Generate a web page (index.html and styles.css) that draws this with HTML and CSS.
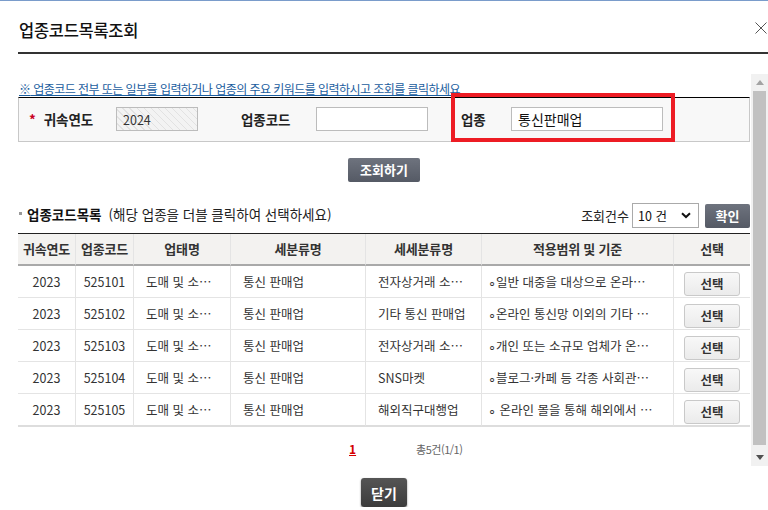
FILE: index.html
```html
<!DOCTYPE html>
<html lang="ko">
<head>
    <meta charset="UTF-8">
    <meta name="viewport" content="width=device-width, initial-scale=1.0">
    <title>업종코드목록조회</title>
    <link rel="stylesheet" href="styles.css">
</head>
<body>
    <div class="pop-head">
        <h1 class="pop-title">업종코드목록조회</h1>
        <svg class="pop-close" width="12" height="12" viewBox="0 0 12 12">
            <path d="M0.5 0.5 L11.5 11.5 M11.5 0.5 L0.5 11.5" stroke="#555" stroke-width="1" fill="none"/>
        </svg>
    </div>

    <div class="frame">
        <div class="frame-body">
            <p class="notice"><span class="notice-mark">※</span> 업종코드 전부 또는 일부를 입력하거나 업종의 주요 키워드를 입력하시고 조회를 클릭하세요</p>

            <div class="search-box">
                <label class="search-label req"><span class="star">*</span>귀속연도</label>
                <div><input type="text" class="inp inp-year" value="2024" readonly></div>
                <label class="search-label">업종코드</label>
                <div><input type="text" class="inp inp-code"></div>
                <label class="search-label">업종</label>
                <div><input type="text" class="inp inp-name" value="통신판매업"></div>
                <div class="mark-box"></div>
            </div>

            <div class="btn-row">
                <button class="btn-dark btn-search">조회하기</button>
            </div>

            <div class="list-head">
                <span class="bullet"></span>
                <strong class="list-title">업종코드목록</strong>
                <span class="list-desc">(해당 업종을 더블 클릭하여 선택하세요)</span>
                <div class="list-tools">
                    <span>조회건수</span>
                    <div class="select">
                        <span>10 건</span>
                        <svg width="10" height="7" viewBox="0 0 10 7"><path d="M1 1.2 L5 5 L9 1.2" stroke="#111" stroke-width="2" fill="none"/></svg>
                    </div>
                    <button class="btn-dark btn-ok">확인</button>
                </div>
            </div>

            <table class="list">
                <colgroup>
                    <col style="width:57px"><col style="width:58px"><col style="width:97px"><col style="width:135px">
                    <col style="width:116px"><col style="width:192px"><col style="width:77px">
                </colgroup>
                <thead>
                    <tr>
                        <th>귀속연도</th><th>업종코드</th><th>업태명</th><th>세분류명</th><th>세세분류명</th><th>적용범위 및 기준</th><th>선택</th>
                    </tr>
                </thead>
                <tbody>
                    <tr>
                        <td class="c">2023</td><td class="c">525101</td><td>도매 및 소…</td><td>통신 판매업</td>
                        <td>전자상거래 소…</td><td class="scope">∘일반 대중을 대상으로 온라…</td>
                        <td class="c"><button class="btn-sel">선택</button></td>
                    </tr>
                    <tr>
                        <td class="c">2023</td><td class="c">525102</td><td>도매 및 소…</td><td>통신 판매업</td>
                        <td>기타 통신 판매업</td><td class="scope">∘온라인 통신망 이외의 기타 …</td>
                        <td class="c"><button class="btn-sel">선택</button></td>
                    </tr>
                    <tr>
                        <td class="c">2023</td><td class="c">525103</td><td>도매 및 소…</td><td>통신 판매업</td>
                        <td>전자상거래 소…</td><td class="scope">∘개인 또는 소규모 업체가 온…</td>
                        <td class="c"><button class="btn-sel">선택</button></td>
                    </tr>
                    <tr>
                        <td class="c">2023</td><td class="c">525104</td><td>도매 및 소…</td><td>통신 판매업</td>
                        <td>SNS마켓</td><td class="scope">∘블로그·카페 등 각종 사회관…</td>
                        <td class="c"><button class="btn-sel">선택</button></td>
                    </tr>
                    <tr>
                        <td class="c">2023</td><td class="c">525105</td><td>도매 및 소…</td><td>통신 판매업</td>
                        <td>해외직구대행업</td><td class="scope">∘ 온라인 몰을 통해 해외에서 …</td>
                        <td class="c"><button class="btn-sel">선택</button></td>
                    </tr>
                </tbody>
            </table>

            <div class="paging">
                <a class="page-on">1</a>
                <span class="page-total">총5건(1/1)</span>
            </div>
        </div>

        <div class="scrollbar">
            <div class="sb-btn"><svg width="8" height="5" viewBox="0 0 8 5"><path d="M0 5 L4 0 L8 5 Z" fill="#a3a3a3"/></svg></div>
            <div class="sb-thumb"></div>
            <div class="sb-btn"><svg width="8" height="5" viewBox="0 0 8 5"><path d="M0 0 L8 0 L4 5 Z" fill="#505050"/></svg></div>
        </div>
    </div>

    <div class="foot">
        <button class="btn-close">닫기</button>
    </div>
</body>
</html>
```

FILE: styles.css
```css
* {
    box-sizing: border-box;
}
body {
    margin: 0;
    font-family: "Noto Sans CJK KR", "Noto Sans", sans-serif;
    font-size: 12px;
    color: #333;
    background: #fff;
    border-top: 1px solid #7a9ccb;
}
button {
    font-family: inherit;
    cursor: pointer;
}
.pop-head {
    display: flex;
    align-items: flex-start;
    height: 53px;
    margin-left: 18px;
    padding-top: 18px;
    border-bottom: 2px solid #333;
}
.pop-title {
    margin: 0 0 0 1px;
    font-size: 16.5px;
    font-weight: 500;
    line-height: 22px;
    color: #111;
    letter-spacing: -0.3px;
}
.pop-close {
    margin: 3px 1px 0 auto;
}
.frame {
    display: flex;
    height: 392px;
    margin-top: 20px;
}
.frame-body {
    flex: 1;
    min-width: 0;
    padding: 0 1px 0 18px;
    overflow: hidden;
}
.notice {
    margin: 0;
    padding: 7px 0 0 1px;
    line-height: 16px;
    color: #1a5d9e;
    text-decoration: underline;
    letter-spacing: -0.55px;
}
.notice-mark {
    font-weight: bold;
}
.search-box {
    position: relative;
    display: grid;
    grid-template-columns: 97px 125px 75px 145px 50px 152px;
    align-items: center;
    padding: 9px 0 10px;
    background: #f8f8f8;
    border: 1px solid #c8c8c8;
    border-top-color: #000;
}
.search-label {
    font-size: 13.5px;
    font-weight: bold;
    color: #222;
    letter-spacing: -0.1px;
    line-height: 24px;
}
.req {
    padding-left: 10px;
}
.star {
    color: #c8001e;
    margin-right: 8px;
}
.inp {
    display: block;
    height: 24px;
    padding: 0 6px;
    border: 1px solid #bcbcbc;
    background: #fff;
    font-family: inherit;
    font-size: 13px;
    color: #111;
    outline: none;
}
.inp-year {
    width: 82px;
    color: #333;
    font-size: 12.5px;
    background: repeating-linear-gradient(45deg, #f3f3f3 0, #f3f3f3 4px, #e2e2e2 4px, #e2e2e2 5px);
}
.inp-code {
    width: 112px;
}
.inp-name {
    width: 152px;
    font-size: 14px;
}
.mark-box {
    position: absolute;
    left: 432px;
    top: -5px;
    width: 224px;
    height: 49px;
    border: 4px solid #ed1c24;
}
.btn-row {
    margin-top: 16px;
    text-align: center;
}
.btn-dark {
    height: 24px;
    padding: 0 10px;
    border: none;
    border-radius: 2px;
    background: linear-gradient(#6e737e, #555a65);
    color: #fff;
    font-size: 13px;
    font-weight: bold;
    line-height: 24px;
}
.btn-search {
    width: 72px;
}
.list-head {
    display: flex;
    align-items: center;
    height: 25px;
    margin-top: 21px;
}
.bullet {
    width: 3px;
    height: 3px;
    margin: 0 5px 4px 1px;
    background: #999;
}
.list-title {
    font-size: 13.5px;
    color: #111;
    margin-bottom: 4px;
}
.list-desc {
    margin: 0 0 4px 7px;
    font-size: 13.5px;
    color: #222;
}
.list-tools {
    display: flex;
    align-items: center;
    margin-left: auto;
    color: #222;
    font-size: 13px;
}
.select {
    display: flex;
    align-items: center;
    justify-content: space-between;
    width: 67px;
    height: 25px;
    margin-left: 3px;
    padding: 0 7px 0 5px;
    border: 1px solid #aaa;
    background: #fff;
    color: #111;
    font-size: 12.5px;
}
.btn-ok {
    width: 45px;
    margin-left: 6px;
    padding: 0;
}
.list {
    width: 100%;
    margin-top: 5px;
    border-top: 1px solid #222;
    border-spacing: 0;
    table-layout: fixed;
}
.list th {
    height: 32px;
    padding: 0;
    line-height: 30px;
    background: #f3f2f0;
    border-bottom: 2px solid #a9a9a9;
    border-left: 1px solid #e4e4e4;
    font-size: 13px;
    color: #333;
    letter-spacing: -0.2px;
    white-space: nowrap;
}
.list td {
    height: 32px;
    padding: 0 0 0 12px;
    line-height: 31px;
    border-bottom: 1px solid #e4e4e4;
    border-left: 1px solid #e4e4e4;
    white-space: nowrap;
    overflow: hidden;
    font-size: 12.5px;
    color: #333;
}
.list th:first-child,
.list td:first-child {
    border-left: none;
}
.list td.c {
    padding: 0;
    text-align: center;
}
.list td.scope {
    padding-left: 6px;
}
.list tbody tr:last-child td {
    border-bottom: 2px solid #ddd;
}
.btn-sel {
    width: 56px;
    height: 24px;
    padding: 0;
    vertical-align: middle;
    border: 1px solid #c9c9c9;
    border-radius: 3px;
    background: linear-gradient(#f8f8f8, #ebebeb);
    color: #333;
    font-size: 12.5px;
    font-weight: bold;
    line-height: 22px;
}
.paging {
    display: flex;
    align-items: baseline;
    margin-top: 12px;
    padding-left: 331px;
    line-height: 20px;
}
.page-on {
    color: #d40000;
    font-weight: bold;
    text-decoration: underline;
}
.page-total {
    margin-left: 60px;
    font-size: 11px;
    color: #666;
    letter-spacing: -0.5px;
}
.scrollbar {
    display: flex;
    flex-direction: column;
    width: 17px;
    background: #f1f1f1;
}
.sb-btn {
    display: flex;
    align-items: center;
    justify-content: center;
    height: 17px;
}
.sb-thumb {
    flex: 1;
    margin: 0 2px 4px;
    background: #c1c1c1;
}
.foot {
    margin-top: 12px;
    text-align: center;
}
.btn-close {
    width: 46px;
    height: 29px;
    padding: 0;
    border: none;
    border-radius: 3px;
    background: linear-gradient(#555, #3c3c3c);
    box-shadow: 0 1px 2px rgba(0, 0, 0, 0.5);
    color: #fff;
    font-size: 14px;
    font-weight: bold;
}
```
